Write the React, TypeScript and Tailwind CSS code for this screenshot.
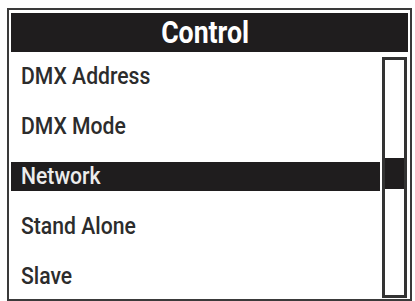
const ITEMS = ["DMX Address", "DMX Mode", "Network", "Stand Alone", "Slave"];
const SELECTED = "Network";

export default function App() {
  return (
    <div className="w-[415px] h-[301px] bg-white pt-[8px] pl-[7px] overflow-hidden" style={{ fontFamily: 'Roboto, "Liberation Sans", Arial, sans-serif' }}>
      <div className="w-[405px] h-[293px] border-2 border-[#3a3a3a] px-[2px] pt-[3px] flex flex-col overflow-hidden">
        <div className="h-[39px] shrink-0 bg-[#1f1d1e] flex items-center justify-center pr-2">
          <span className="inline-block text-[31px] font-bold text-white leading-none scale-x-[0.86]">Control</span>
        </div>

        <div className="flex flex-1 min-h-0">
          <ul className="w-[369px] overflow-hidden">
            {ITEMS.map((item, i) => {
              const active = item === SELECTED;
              return (
                <li key={item} className={`${i === 0 ? "h-[49px]" : "h-[50px]"} flex items-center`}>
                  <div className={`w-full h-[29px] flex items-center pl-[10px] ${active ? "bg-[#1f1d1e] text-[#ececec]" : "text-[#2c2c2c]"}`}>
                    <span className="inline-block text-[23px] font-medium leading-none origin-left scale-x-[0.92] whitespace-nowrap">{item}</span>
                  </div>
                </li>
              );
            })}
          </ul>

          <div className="ml-[2px] mt-[5px] w-[25px] h-[241px] border-[3px] border-[#333] bg-white">
            <div className="mt-[98px] h-[31px] bg-[#1f1d1e]" />
          </div>
        </div>
      </div>
    </div>
  );
}
